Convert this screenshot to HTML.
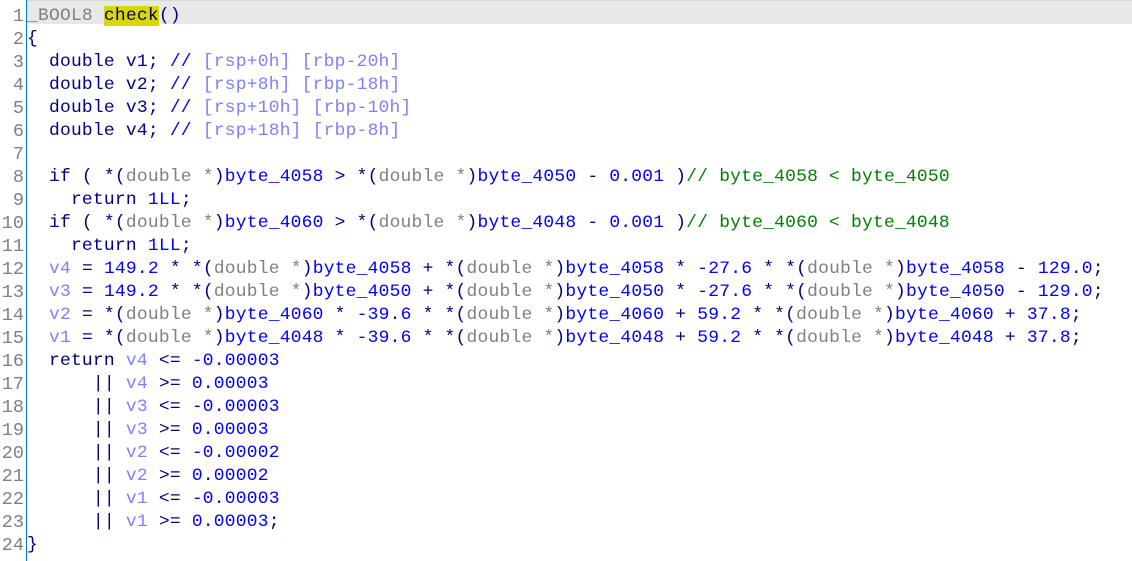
<!DOCTYPE html>
<html><head><meta charset="utf-8"><style>
html,body{margin:0;padding:0;background:#fff;width:1132px;height:561px;overflow:hidden}
.wrap{position:relative;width:1132px;height:561px}
.hl{position:absolute;left:27px;top:0;width:1105px;height:24px;background:#e8e8e8;border-top:1px solid #d8d8d8;box-sizing:border-box}
.gut{position:absolute;left:26px;top:0;width:1px;height:561px;background:#0078d7}
.num{position:absolute;left:0;top:4.5px;width:24px;text-align:right;color:#808080;font-size:18.5px}
.code{position:absolute;left:27px;top:4.5px;color:#000080;letter-spacing:0.23px}
.num,.code{font-family:"Liberation Mono",monospace;line-height:23px;white-space:pre}
.code{font-size:17.93px}
.g{color:#808080}.b{color:#0000ff}.p{color:#8080ff}.c{color:#008000}
.y{background:#d8d800}
</style></head><body><div class="wrap">
<div class="hl"></div><div class="gut"></div>
<div class="num">1
2
3
4
5
6
7
8
9
10
11
12
13
14
15
16
17
18
19
20
21
22
23
24</div>
<div class="code"><span class="g">_BOOL8</span> <span class="y">check</span>()
{
  double v1; <span class="b">//</span> <span class="p">[rsp+0h] [rbp-20h]</span>
  double v2; <span class="b">//</span> <span class="p">[rsp+8h] [rbp-18h]</span>
  double v3; <span class="b">//</span> <span class="p">[rsp+10h] [rbp-10h]</span>
  double v4; <span class="b">//</span> <span class="p">[rsp+18h] [rbp-8h]</span>

  if ( *(<span class="g">double *</span>)<span class="b">byte_4058</span> &gt; *(<span class="g">double *</span>)<span class="b">byte_4050</span> - <span class="b">0.001</span> )<span class="c">// byte_4058 &lt; byte_4050</span>
    return <span class="b">1LL</span>;
  if ( *(<span class="g">double *</span>)<span class="b">byte_4060</span> &gt; *(<span class="g">double *</span>)<span class="b">byte_4048</span> - <span class="b">0.001</span> )<span class="c">// byte_4060 &lt; byte_4048</span>
    return <span class="b">1LL</span>;
  <span class="p">v4</span> = <span class="b">149.2</span> * *(<span class="g">double *</span>)<span class="b">byte_4058</span> + *(<span class="g">double *</span>)<span class="b">byte_4058</span> * <span class="b">-27.6</span> * *(<span class="g">double *</span>)<span class="b">byte_4058</span> - <span class="b">129.0</span>;
  <span class="p">v3</span> = <span class="b">149.2</span> * *(<span class="g">double *</span>)<span class="b">byte_4050</span> + *(<span class="g">double *</span>)<span class="b">byte_4050</span> * <span class="b">-27.6</span> * *(<span class="g">double *</span>)<span class="b">byte_4050</span> - <span class="b">129.0</span>;
  <span class="p">v2</span> = *(<span class="g">double *</span>)<span class="b">byte_4060</span> * <span class="b">-39.6</span> * *(<span class="g">double *</span>)<span class="b">byte_4060</span> + <span class="b">59.2</span> * *(<span class="g">double *</span>)<span class="b">byte_4060</span> + <span class="b">37.8</span>;
  <span class="p">v1</span> = *(<span class="g">double *</span>)<span class="b">byte_4048</span> * <span class="b">-39.6</span> * *(<span class="g">double *</span>)<span class="b">byte_4048</span> + <span class="b">59.2</span> * *(<span class="g">double *</span>)<span class="b">byte_4048</span> + <span class="b">37.8</span>;
  return <span class="p">v4</span> &lt;= <span class="b">-0.00003</span>
      || <span class="p">v4</span> &gt;= <span class="b">0.00003</span>
      || <span class="p">v3</span> &lt;= <span class="b">-0.00003</span>
      || <span class="p">v3</span> &gt;= <span class="b">0.00003</span>
      || <span class="p">v2</span> &lt;= <span class="b">-0.00002</span>
      || <span class="p">v2</span> &gt;= <span class="b">0.00002</span>
      || <span class="p">v1</span> &lt;= <span class="b">-0.00003</span>
      || <span class="p">v1</span> &gt;= <span class="b">0.00003</span>;
}</div>
</div></body></html>
